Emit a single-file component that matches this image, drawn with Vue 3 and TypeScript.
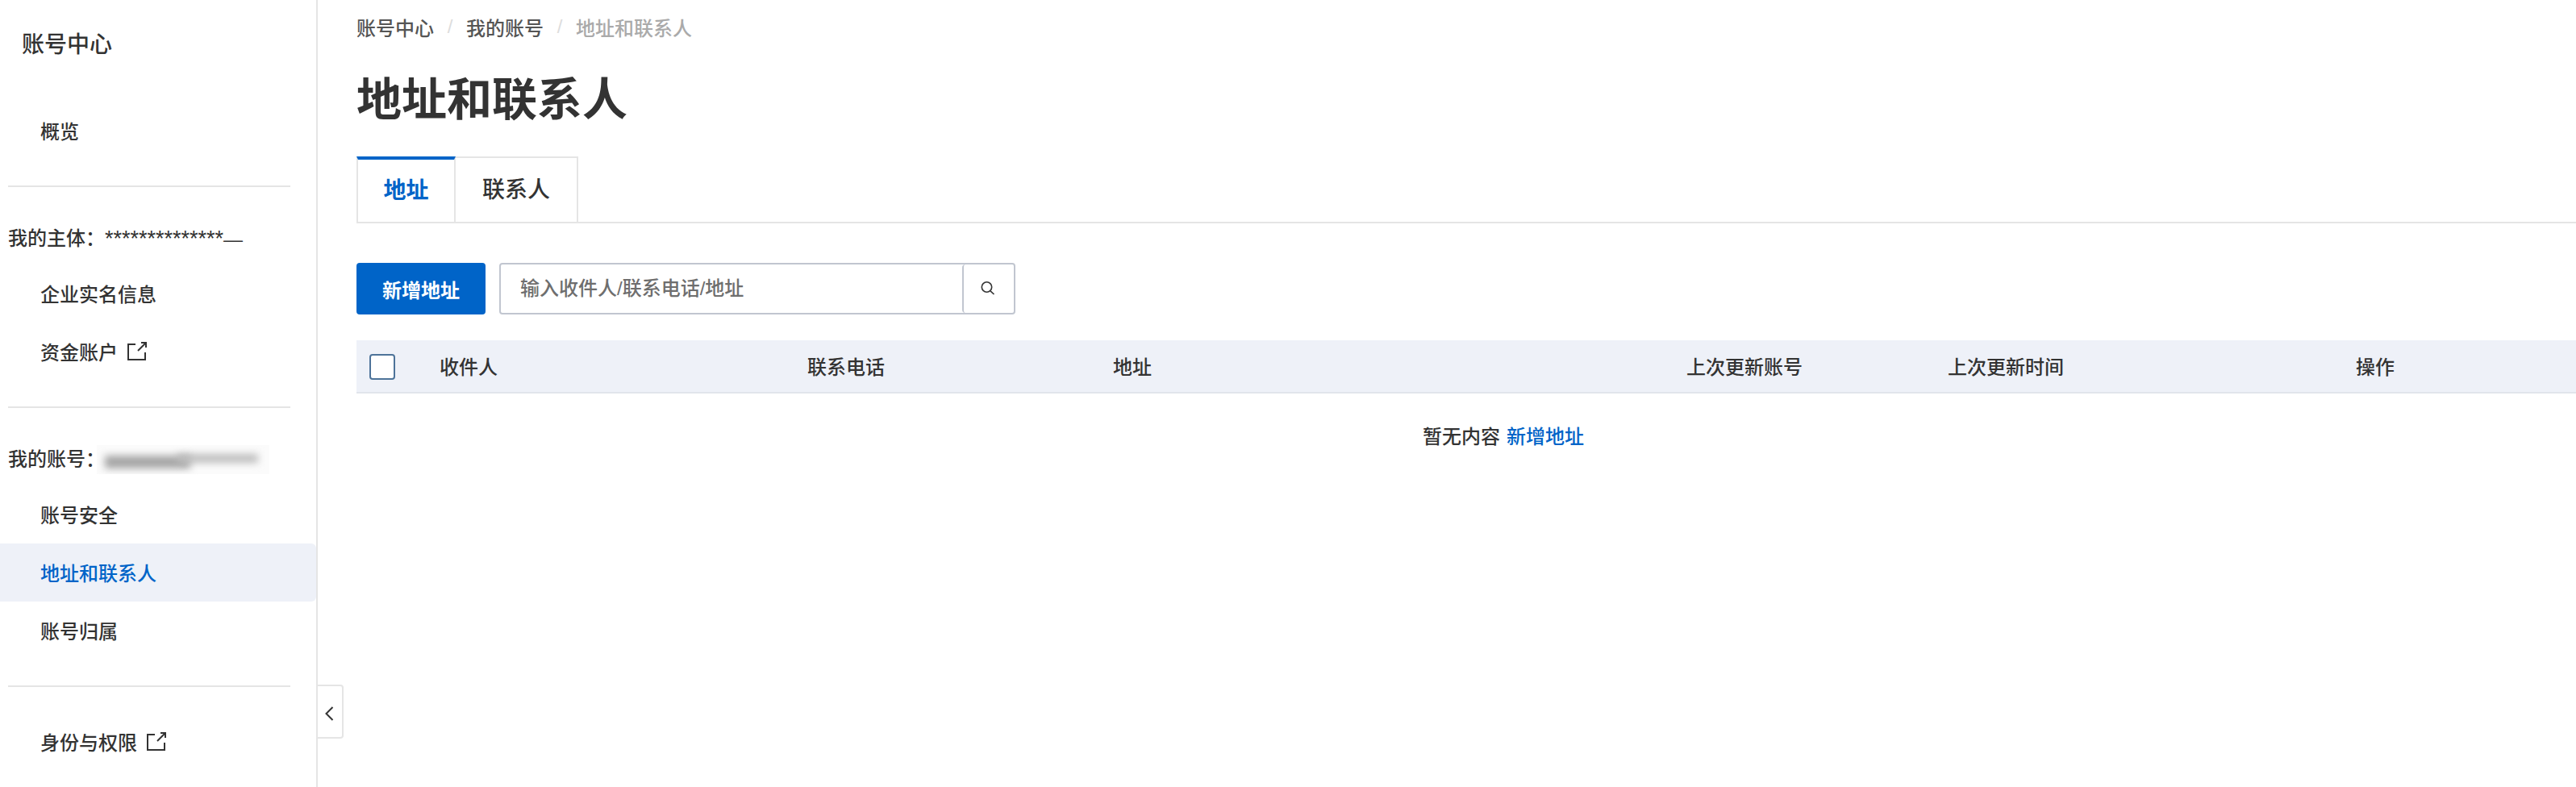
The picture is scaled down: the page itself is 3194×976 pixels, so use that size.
<script setup lang="ts">
interface Column { label: string; width: number }
const columns: Column[] = [
  { label: '收件人', width: 456 },
  { label: '联系电话', width: 379 },
  { label: '地址', width: 711 },
  { label: '上次更新账号', width: 324 },
  { label: '上次更新时间', width: 506 },
  { label: '操作', width: 273 }
]
</script>

<template>
  <div class="page">
    <aside class="side">
      <div class="side-title">账号中心</div>
      <a class="item first">概览</a>
      <div class="rule"></div>
      <div class="label">我的主体：<span class="masked"><span class="stars">**************</span>—</span></div>
      <a class="item">企业实名信息</a>
      <a class="item">资金账户
        <svg class="ext" viewBox="0 0 24 24" fill="none" stroke="#333" stroke-width="2"><path d="M10 4H1V23H22V14" /><path d="M13 12L23 2" /><path d="M17 2H23V8" /></svg>
      </a>
      <div class="rule"></div>
      <div class="label acct">我的账号：<span class="blur-box"><i class="blur-a"></i><i class="blur-b"></i></span></div>
      <a class="item">账号安全</a>
      <a class="item active">地址和联系人</a>
      <a class="item">账号归属</a>
      <div class="rule last"></div>
      <a class="item">身份与权限
        <svg class="ext" viewBox="0 0 24 24" fill="none" stroke="#333" stroke-width="2"><path d="M10 4H1V23H22V14" /><path d="M13 12L23 2" /><path d="M17 2H23V8" /></svg>
      </a>
      <button class="collapse" type="button" aria-label="收起">
        <svg viewBox="0 0 12 20" width="12" height="20" fill="none" stroke="#333" stroke-width="2"><path d="M9.5 2L1.5 10L9.5 18" /></svg>
      </button>
    </aside>

    <main class="main">
      <nav class="crumbs">
        <span>账号中心</span><i class="sep">/</i><span>我的账号</span><i class="sep">/</i><span class="cur">地址和联系人</span>
      </nav>
      <h1 class="title">地址和联系人</h1>
      <div class="tabs">
        <div class="tab on">地址</div>
        <div class="tab">联系人</div>
      </div>
      <div class="toolbar">
        <button class="primary" type="button">新增地址</button>
        <div class="search">
          <div class="search-input">输入收件人/联系电话/地址</div>
          <div class="search-btn">
            <svg viewBox="0 0 20 20" width="20" height="20" fill="none" stroke="#333" stroke-width="1.6"><circle cx="7.5" cy="8" r="6.2" /><path d="M12 12.8L16.5 17" /></svg>
          </div>
        </div>
      </div>
      <div class="thead">
        <div class="check-cell"><span class="check"></span></div>
        <div v-for="c in columns" :key="c.label" class="th" :style="{ width: c.width + 'px' }">{{ c.label }}</div>
      </div>
      <div class="empty">暂无内容<a class="link">新增地址</a></div>
    </main>
  </div>
</template>

<style scoped>
.page {
  display: flex;
  width: 3194px;
  height: 976px;
  overflow: hidden;
  background: #fff;
  color: #333;
  font-family: "Liberation Sans", "Noto Sans CJK SC", sans-serif;
  font-size: 24px;
  font-weight: 500;
}
.side {
  position: relative;
  flex: none;
  box-sizing: content-box;
  width: 392px;
  border-right: 2px solid #e5e5e5;
  display: flex;
  flex-direction: column;
}
.side-title {
  height: 112px;
  line-height: 112px;
  padding-left: 27px;
  font-size: 28px;
  margin-bottom: 14px;
}
.item {
  display: flex;
  align-items: center;
  flex: none;
  box-sizing: border-box;
  height: 72px;
  padding: 0 0 2px 50px;
  border-radius: 0 6px 6px 0;
}
.item.active {
  background: #eef1f8;
  color: #0064c8;
}
.ext {
  width: 24px;
  height: 24px;
  margin-left: 12px;
}
.rule {
  flex: none;
  height: 2px;
  width: 350px;
  margin: 32px 0 40px 10px;
  background: #e5e5e5;
}
.rule.last { margin-bottom: 32px; }
.label {
  height: 48px;
  line-height: 48px;
  padding-left: 10px;
  margin-bottom: 8px;
  white-space: nowrap;
  display: flex;
}
.stars { font-size: 27px; }
.blur-box {
  position: relative;
  width: 214px;
  height: 36px;
  margin: 6px 0 0 -10px;
  overflow: hidden;
  background: #fbfbfb;
}
.blur-a, .blur-b {
  position: absolute;
  filter: blur(5px);
}
.blur-a { left: 10px; top: 13px; width: 106px; height: 16px; background: #a6a6a6; }
.blur-b { left: 100px; top: 11px; width: 100px; height: 11px; background: #bdbdbd; }
.collapse {
  position: absolute;
  left: 394px;
  top: 849px;
  width: 32px;
  height: 67px;
  padding: 4px 0 0 9px;
  display: flex;
  align-items: center;
  background: #fff;
  border: 2px solid #e5e5e5;
  border-left: 0;
  border-radius: 0 4px 4px 0;
}
.main {
  flex: none;
  width: 2752px;
  margin-left: 48px;
}
.crumbs {
  display: flex;
  align-items: center;
  height: 36px;
  margin-top: 15px;
  color: #555;
}
.sep {
  width: 40px;
  text-align: center;
  color: #ddd;
  font-style: normal;
}
.cur { color: #aaa; }
.title {
  margin: 33px 0 30px;
  font-size: 56px;
  line-height: 80px;
  font-weight: 700;
  color: #333;
}
.tabs {
  display: flex;
  height: 83px;
  box-shadow: inset 0 -2px 0 #e5e5e5;
}
.tab {
  box-sizing: border-box;
  width: 152px;
  height: 83px;
  border: 2px solid #e5e5e5;
  border-left: 0;
  font-size: 28px;
  line-height: 80px;
  text-align: center;
}
.tab.on {
  width: 123px;
  border-left: 2px solid #e5e5e5;
  border-top: 4px solid #0064c8;
  border-right: 2px solid #e5e5e5;
  border-bottom: 0;
  color: #0064c8;
  font-weight: 700;
  line-height: 78px;
}
.toolbar {
  display: flex;
  height: 64px;
  margin: 49px 0 32px;
}
.primary {
  width: 160px;
  height: 64px;
  border: 0;
  padding: 0;
  border-radius: 4px;
  background: #0064c8;
  color: #fff;
  font: 700 24px "Liberation Sans", "Noto Sans CJK SC", sans-serif;
}
.search {
  display: flex;
  box-sizing: border-box;
  width: 640px;
  margin-left: 17px;
  border: 2px solid #c1c6d0;
  border-radius: 4px;
}
.search-input {
  flex: 1;
  padding-left: 24px;
  line-height: 60px;
  color: #6e6e6e;
}
.search-btn {
  box-sizing: border-box;
  width: 64px;
  border-left: 2px solid #c1c6d0;
  border-radius: 4px;
  display: flex;
  align-items: center;
  justify-content: center;
}
.thead {
  display: flex;
  align-items: center;
  box-sizing: border-box;
  height: 66px;
  padding-bottom: 2px;
  background: #eef1f8;
  border-bottom: 2px solid #e1e5eb;
}
.check-cell {
  flex: none;
  width: 103px;
  padding: 4px 0 0 16px;
  box-sizing: border-box;
}
.check {
  display: block;
  box-sizing: border-box;
  width: 32px;
  height: 32px;
  background: #fff;
  border: 2px solid #4d7399;
  border-radius: 4px;
}
.th { flex: none; }
.empty {
  height: 108px;
  line-height: 108px;
  text-align: center;
  padding-left: 92px;
}
.link {
  margin-left: 8px;
  color: #0064c8;
}
</style>
